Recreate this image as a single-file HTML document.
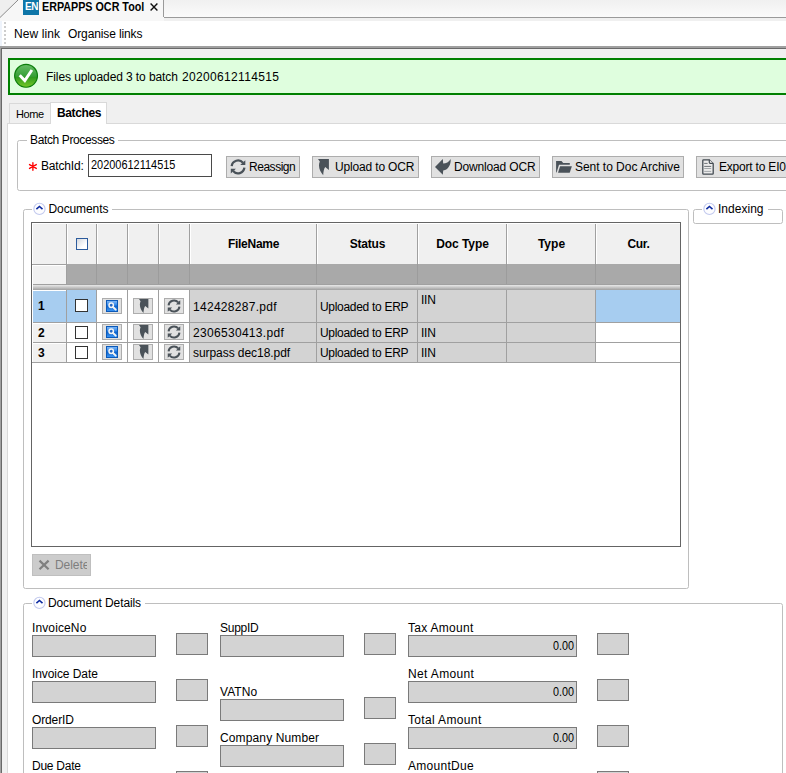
<!DOCTYPE html>
<html><head><meta charset="utf-8">
<style>
*{box-sizing:border-box;margin:0;padding:0}
html,body{width:786px;height:773px;overflow:hidden;background:#f0f0f0}
body{position:relative;font-family:"Liberation Sans",sans-serif;font-size:12px;color:#000}
.a{position:absolute}
.t{position:absolute;white-space:nowrap;line-height:14px;height:14px}
.b{font-weight:bold}
.btn{position:absolute;background:#e1e1e1;border:1px solid #adadad}
.fs{position:absolute;border:1px solid #bebebe;border-radius:2.5px}
.lg{position:absolute;background:#fff;height:14px}
.in{position:absolute;background:#d3d3d3;border:1px solid #7a7a7a}
.cb{position:absolute;width:13px;height:13px;background:#fff;border:1px solid #333}
.vl{position:absolute;width:1px;background:#a0a0a0}
.hl{position:absolute;height:1px;background:#a0a0a0}
/*LS*/
#en{letter-spacing:-0.35px}
#nl{letter-spacing:0.09px}
#ol{letter-spacing:-0.12px}
#bn{letter-spacing:-0.09px}
#bn2{letter-spacing:0.34px}
#home{letter-spacing:-0.44px}
#batches{letter-spacing:-0.37px}
#bp{letter-spacing:-0.37px}
#bid{letter-spacing:-0.17px}
#b1{letter-spacing:-0.47px}
#b2{letter-spacing:-0.16px}
#b3{letter-spacing:-0.16px}
#b4{letter-spacing:-0.03px}
#docs{letter-spacing:-0.10px}
#idx{letter-spacing:0.02px}
#dd{letter-spacing:-0.11px}
#h1{letter-spacing:-0.27px}
#h2{letter-spacing:-0.20px}
#h3{letter-spacing:-0.05px}
#h4{letter-spacing:0.02px}
#h5{letter-spacing:-0.29px}
#f1{letter-spacing:0.29px}
#f2{letter-spacing:0.31px}
#f3{letter-spacing:-0.06px}
#s1{letter-spacing:-0.30px}
#s2{letter-spacing:-0.30px}
#s3{letter-spacing:-0.30px}
#d1{letter-spacing:-0.21px}
#d2{letter-spacing:-0.21px}
#d3{letter-spacing:-0.21px}
#l1{letter-spacing:0.12px}
#l2{letter-spacing:-0.08px}
#l3{letter-spacing:-0.13px}
#l4{letter-spacing:-0.25px}
#l5{letter-spacing:-0.27px}
#l6{letter-spacing:0.06px}
#l7{letter-spacing:0.13px}
#l8{letter-spacing:0.29px}
#l9{letter-spacing:0.36px}
#l10{letter-spacing:0.35px}
#l11{letter-spacing:0.29px}
/*ENDLS*/
</style></head><body>

<!-- top tab strip -->
<div class="a" style="left:0;top:0;width:786px;height:18px;background:linear-gradient(#f0f0f0,#fbfbfb)"></div>
<div class="a" style="left:0;top:0;width:164px;height:21px;background:#f7f7f7"></div>
<svg class="a" style="left:0;top:0" width="20" height="20"><polygon points="0,0 17.5,0 0,17" fill="#efefef"/><line x1="18" y1="0" x2="0" y2="17.5" stroke="#8a8a8a" stroke-width="1"/></svg>
<div class="a" style="left:163px;top:0;width:1px;height:17px;background:#9a9a9a"></div>
<div class="a" style="left:164px;top:17px;width:622px;height:1px;background:#9a9a9a"></div>
<div class="a" style="left:164px;top:18px;width:622px;height:3px;background:#f0f0f0"></div>
<div class="a" style="left:23px;top:0;width:16px;height:15px;background:#0f76a8"></div>
<div class="t b" id="en" style="left:25px;top:0px;font-size:10px;color:#fff">EN</div>
<div class="t b" id="title" style="left:42px;top:0px;font-size:12px;transform-origin:0 0;transform:scaleX(0.895)">ERPAPPS OCR Tool</div>
<svg class="a" style="left:149px;top:1.5px" width="10" height="10"><path d="M1.6 1.6 L8.4 8.4 M8.4 1.6 L1.6 8.4" stroke="#111" stroke-width="1.4"/></svg>

<!-- toolbar -->
<div class="a" style="left:0;top:21px;width:786px;height:25px;background:#fff"></div>
<div class="a" style="left:0;top:21px;width:2px;height:25px;background:#eef3fb"></div>
<div class="a" style="left:4px;top:22px;width:2px;height:25px;background:repeating-linear-gradient(#cdcdcd 0 2px,#fff 2px 4px)"></div>
<div class="t" id="nl" style="left:14px;top:27px;font-size:12px">New link</div>
<div class="t" id="ol" style="left:68px;top:27px;font-size:12px">Organise links</div>

<!-- main panel border -->
<div class="a" style="left:0;top:46px;width:786px;height:2px;background:#a0a0a0"></div>
<div class="a" style="left:0;top:48px;width:786px;height:1px;background:#696969"></div>
<div class="a" style="left:0;top:46px;width:1px;height:727px;background:#a0a0a0"></div>
<div class="a" style="left:1px;top:48px;width:1px;height:725px;background:#696969"></div>

<!-- banner -->
<div class="a" style="left:8px;top:58px;width:790px;height:37px;background:#dffede;border:2px solid #008000"></div>
<svg class="a" style="left:13px;top:63px" width="26" height="26" viewBox="0 0 26 26">
<defs><linearGradient id="g1" x1="0" y1="0" x2="0" y2="1"><stop offset="0" stop-color="#66bd66"/><stop offset="0.52" stop-color="#379f37"/><stop offset="0.56" stop-color="#2f9a1f"/><stop offset="1" stop-color="#78c828"/></linearGradient></defs>
<circle cx="13.05" cy="12.85" r="11.4" fill="url(#g1)" stroke="#0b7d0b" stroke-width="1.2"/>
<path d="M6.7 12.3 L11.8 17.6 L18.9 7" fill="none" stroke="#fff" stroke-width="2.9" stroke-linejoin="miter"/>
</svg>
<div class="t" id="bn" style="left:46px;top:70px;font-size:12px">Files uploaded 3 to batch</div>
<div class="t" id="bn2" style="left:182px;top:70px;font-size:12px">20200612114515</div>

<!-- tabs -->
<div class="a" style="left:7px;top:123px;width:790px;height:660px;background:#fff;border:1px solid #d9d9d9"></div>
<div class="a" style="left:9px;top:103px;width:42px;height:20px;background:#f0f0f0;border:1px solid #d9d9d9;border-bottom:none"></div>
<div class="a" style="left:50px;top:102px;width:57px;height:22px;background:#fff;border:1px solid #d9d9d9;border-bottom:none"></div>
<div class="t" id="home" style="left:16px;top:107px;font-size:11px">Home</div>
<div class="t b" id="batches" style="left:57px;top:106px;font-size:12px">Batches</div>

<!-- Batch processes -->
<div class="fs" style="left:17px;top:140px;width:790px;height:51px"></div>
<div class="lg" style="left:27px;top:133px;width:91px"></div>
<div class="t" id="bp" style="left:30px;top:133px;font-size:12px">Batch Processes</div>
<svg class="a" style="left:27px;top:160px" width="12" height="13" viewBox="0 0 12 13"><path d="M5.9 2.7 V10.3 M2.5 4.55 L9.3 8.45 M9.3 4.55 L2.5 8.45" stroke="#ff0000" stroke-width="1.35" stroke-linecap="round" fill="none"/></svg>
<div class="t" id="bid" style="left:41px;top:159px;font-size:12px">BatchId:</div>
<div class="a" style="left:88px;top:154px;width:124px;height:23px;background:#fff;border:1px solid #4a4a4a"></div>
<div class="t" id="bidv" style="left:91px;top:158px;font-size:13px;transform-origin:0 0;transform:scaleX(0.842)">20200612114515</div>

<div class="btn" style="left:226px;top:156px;width:74px;height:22px"></div>
<svg class="a" style="left:226px;top:154px" width="26" height="26" viewBox="0 0 26 26"><use href="#iref"/></svg>
<div class="t" id="b1" style="left:249px;top:160px;font-size:12px">Reassign</div>

<div class="btn" style="left:312px;top:156px;width:107px;height:22px"></div>
<svg class="a" style="left:318px;top:159px" width="14" height="18" viewBox="0 0 14 18"><use href="#iup"/></svg>
<div class="t" id="b2" style="left:335px;top:160px;font-size:12px">Upload to OCR</div>

<div class="btn" style="left:431px;top:156px;width:109px;height:22px"></div>
<svg class="a" style="left:430px;top:154px" width="26" height="26" viewBox="0 0 26 26"><path d="M5 13 L12.8 5 L13.2 9.6 C16 9.6 19 8 20.6 5 C21.2 10 18.5 15.8 13.2 16.6 L12.8 20.8 Z" fill="#4a5259"/></svg>
<div class="t" id="b3" style="left:454px;top:160px;font-size:12px">Download OCR</div>

<div class="btn" style="left:552px;top:156px;width:132px;height:22px"></div>
<svg class="a" style="left:550px;top:154px" width="26" height="26" viewBox="0 0 26 26"><path d="M6.1 7.1 L11.5 7.1 L13.2 9 L19.8 9 L19.8 10.7 L9 10.7 L6.6 18.4 L6.1 18.4 Z" fill="#4a5259"/><path d="M10.1 12.2 L21.9 12.2 L19.7 18.7 L8 18.7 Z" fill="#4a5259"/></svg>
<div class="t" id="b4" style="left:575px;top:160px;font-size:12px">Sent to Doc Archive</div>

<div class="btn" style="left:696px;top:156px;width:110px;height:22px"></div>
<svg class="a" style="left:694px;top:154px" width="26" height="26" viewBox="0 0 26 26"><path d="M9.5 5.8 L15.3 5.8 L19.2 9.7 L19.2 19.5 Q19.2 20.2 18.5 20.2 L9.5 20.2 Q8.8 20.2 8.8 19.5 L8.8 6.5 Q8.8 5.8 9.5 5.8 Z" fill="#ebebeb" stroke="#434b52" stroke-width="1.3"/><path d="M15.3 5.8 L15.3 8.6 Q15.3 9.4 16.1 9.4 L19.2 9.4" fill="#ebebeb" stroke="#434b52" stroke-width="1.2"/><path d="M10.2 9.4 H13.6 M10.2 12.4 H17.2" stroke="#5d646a" stroke-width="0.9"/><path d="M10.2 14.5 H17.2 M10.2 17.4 H17.2" stroke="#9a9fa3" stroke-width="0.9"/></svg>
<div class="t" id="b5" style="left:719px;top:160px;font-size:12px;letter-spacing:-0.2px">Export to EI02</div>

<!-- Documents fieldset -->
<div class="fs" style="left:23px;top:209px;width:666px;height:380px"></div>
<div class="lg" style="left:32px;top:202px;width:80px"></div>
<svg class="a" style="left:32px;top:201px" width="15" height="15" viewBox="0 0 15 15"><circle cx="7.45" cy="7.9" r="5.6" fill="#fdfdff" stroke="#c2c9ee" stroke-width="1.1"/><path d="M4.4 8.1 L7.45 5.5 L10.5 8.1" fill="none" stroke="#0c2aa0" stroke-width="1.6"/></svg>
<div class="t" id="docs" style="left:48.5px;top:202px;font-size:12px">Documents</div>

<!-- Indexing fieldset -->
<div class="fs" style="left:693px;top:209px;width:90px;height:15px"></div>
<div class="lg" style="left:702px;top:202px;width:66px"></div>
<svg class="a" style="left:702px;top:201px" width="15" height="15" viewBox="0 0 15 15"><circle cx="7.45" cy="7.9" r="5.6" fill="#fdfdff" stroke="#c2c9ee" stroke-width="1.1"/><path d="M4.4 8.1 L7.45 5.5 L10.5 8.1" fill="none" stroke="#0c2aa0" stroke-width="1.6"/></svg>
<div class="t" id="idx" style="left:718px;top:202px;font-size:12px">Indexing</div>

<!-- grid -->
<div class="a" id="grid" style="left:31px;top:222px;width:650px;height:325px;background:#fff;border:1px solid #646464"></div>
<!-- header -->
<div class="a" style="left:32px;top:223px;width:648px;height:41px;background:#f0f0f0"></div>
<div class="a" style="left:32px;top:264px;width:35px;height:20px;background:#f0f0f0"></div>
<div class="a" style="left:67px;top:264px;width:613px;height:20px;background:#a9a9a9"></div>
<div class="a" style="left:32px;top:284px;width:648px;height:1px;background:#a0a0a0"></div>
<div class="a" style="left:32px;top:285px;width:648px;height:5px;background:linear-gradient(#e8e8e8,#a0a0a0)"></div>
<!-- header verticals -->
<div class="vl" style="left:66px;top:223px;height:41px"></div>
<div class="vl" style="left:96px;top:223px;height:41px"></div>
<div class="vl" style="left:127px;top:223px;height:41px"></div>
<div class="vl" style="left:158px;top:223px;height:41px"></div>
<div class="vl" style="left:189px;top:223px;height:41px"></div>
<div class="vl" style="left:316px;top:223px;height:41px"></div>
<div class="vl" style="left:417px;top:223px;height:41px"></div>
<div class="vl" style="left:506px;top:223px;height:41px"></div>
<div class="vl" style="left:595px;top:223px;height:41px"></div>
<div class="vl" style="left:96px;top:264px;height:20px;background:#9c9c9c"></div>
<div class="vl" style="left:127px;top:264px;height:20px;background:#9c9c9c"></div>
<div class="vl" style="left:158px;top:264px;height:20px;background:#9c9c9c"></div>
<div class="vl" style="left:189px;top:264px;height:20px;background:#9c9c9c"></div>
<div class="vl" style="left:316px;top:264px;height:20px;background:#9c9c9c"></div>
<div class="vl" style="left:417px;top:264px;height:20px;background:#9c9c9c"></div>
<div class="vl" style="left:506px;top:264px;height:20px;background:#9c9c9c"></div>
<div class="vl" style="left:595px;top:264px;height:20px;background:#9c9c9c"></div>
<div class="vl" style="left:67px;top:224px;height:40px;background:#fff"></div>
<div class="vl" style="left:97px;top:224px;height:40px;background:#fff"></div>
<div class="vl" style="left:128px;top:224px;height:40px;background:#fff"></div>
<div class="vl" style="left:159px;top:224px;height:40px;background:#fff"></div>
<div class="vl" style="left:190px;top:224px;height:40px;background:#fff"></div>
<div class="vl" style="left:317px;top:224px;height:40px;background:#fff"></div>
<div class="vl" style="left:418px;top:224px;height:40px;background:#fff"></div>
<div class="vl" style="left:507px;top:224px;height:40px;background:#fff"></div>
<div class="vl" style="left:596px;top:224px;height:40px;background:#fff"></div>
<div class="a" style="left:32px;top:223px;width:648px;height:1px;background:#fff"></div>
<div class="a" style="left:32px;top:223px;width:1px;height:139px;background:#fff"></div>
<div class="hl" style="left:32px;top:264px;width:35px"></div>
<div class="a" style="left:33px;top:265px;width:33px;height:1px;background:#fff"></div>
<div class="vl" style="left:66px;top:264px;height:20px"></div>
<div class="a" style="left:76px;top:238px;width:12px;height:12px;border:1px solid #2c5b9c;background:linear-gradient(135deg,#d4d8de,#fff 70%)"></div>
<div class="t b" id="h1" style="left:190px;top:237px;width:127px;text-align:center;font-size:12px">FileName</div>
<div class="t b" id="h2" style="left:317px;top:237px;width:101px;text-align:center;font-size:12px">Status</div>
<div class="t b" id="h3" style="left:418px;top:237px;width:89px;text-align:center;font-size:12px">Doc Type</div>
<div class="t b" id="h4" style="left:507px;top:237px;width:89px;text-align:center;font-size:12px">Type</div>
<div class="t b" id="h5" style="left:596px;top:237px;width:85px;text-align:center;font-size:12px">Cur.</div>

<!-- rows backgrounds -->
<div class="a" style="left:32px;top:290px;width:64px;height:32px;background:#a7cdf0"></div>
<div class="a" style="left:32px;top:323px;width:34px;height:39px;background:#f0f0f0"></div>
<div class="a" style="left:190px;top:290px;width:406px;height:72px;background:#d3d3d3"></div>
<div class="a" style="left:596px;top:290px;width:84px;height:32px;background:#a7cdf0"></div>
<!-- row lines -->
<div class="hl" style="left:32px;top:322px;width:648px"></div>
<div class="hl" style="left:32px;top:342px;width:648px"></div>
<div class="hl" style="left:32px;top:362px;width:648px"></div>
<div class="vl" style="left:66px;top:290px;height:72px"></div>
<div class="vl" style="left:96px;top:290px;height:72px"></div>
<div class="vl" style="left:127px;top:290px;height:72px"></div>
<div class="vl" style="left:158px;top:290px;height:72px"></div>
<div class="vl" style="left:189px;top:290px;height:72px"></div>
<div class="vl" style="left:316px;top:290px;height:72px"></div>
<div class="vl" style="left:417px;top:290px;height:72px"></div>
<div class="vl" style="left:506px;top:290px;height:72px"></div>
<div class="vl" style="left:595px;top:290px;height:72px"></div>

<div class="a" style="left:32px;top:290px;width:1px;height:72px;background:#fff"></div>
<div class="a" style="left:33px;top:290px;width:33px;height:1px;background:#fff"></div>
<div class="a" style="left:33px;top:323px;width:33px;height:1px;background:#fff"></div>
<div class="a" style="left:33px;top:343px;width:33px;height:1px;background:#fff"></div>
<div class="t b" id="n1" style="left:38px;top:299px;font-size:12px">1</div>
<div class="t b" id="n2" style="left:38px;top:326px;font-size:12px">2</div>
<div class="t b" id="n3" style="left:38px;top:346px;font-size:12px">3</div>
<div class="cb" style="left:75px;top:299px"></div>
<div class="cb" style="left:75px;top:326px"></div>
<div class="cb" style="left:75px;top:346px"></div>

<svg width="0" height="0" style="position:absolute"><defs>
<g id="isearch"><linearGradient id="sg" x1="0" y1="0" x2="0" y2="1"><stop offset="0" stop-color="#86bbf6"/><stop offset="0.42" stop-color="#2f86ea"/><stop offset="0.5" stop-color="#0c60c8"/><stop offset="1" stop-color="#409af8"/></linearGradient><rect x="0.5" y="0.5" width="11" height="11" fill="url(#sg)" stroke="#0c59b8" stroke-width="1"/><circle cx="5.2" cy="5.2" r="2.2" fill="#2468c4" stroke="#f4f4f4" stroke-width="1.5"/><path d="M7 7 L9.7 9.7" stroke="#f4f4f4" stroke-width="1.9" stroke-linecap="round"/></g>
<g id="iup"><path d="M0 0 L10.9 0 L10.9 11 L7.2 8 C5.9 9.8 5.4 12.8 5.2 16.2 C2 12.8 -0.3 7.6 1.8 2.5 Z" fill="#4a5259"/></g>
<g id="iref"><g fill="none" stroke="#4a5259" stroke-width="2.3"><path d="M5.7 12.12 A6.4 6.4 0 0 1 16.95 8.79"/><path d="M18.4 13.68 A6.4 6.4 0 0 1 7.15 17.01"/></g><path d="M19.3 6.2 L19.3 11.1 L14.2 11.1 Z" fill="#4a5259"/><path d="M4.8 19.6 L4.8 14.7 L9.9 14.7 Z" fill="#4a5259"/></g>
</defs></svg>

<!-- row buttons -->
<div class="btn" style="left:102px;top:298px;width:20px;height:16px"></div>
<div class="btn" style="left:102px;top:324px;width:20px;height:16px"></div>
<div class="btn" style="left:102px;top:344px;width:20px;height:16px"></div>
<svg class="a" style="left:106px;top:300px" width="12" height="12"><use href="#isearch"/></svg>
<svg class="a" style="left:106px;top:326px" width="12" height="12"><use href="#isearch"/></svg>
<svg class="a" style="left:106px;top:346px" width="12" height="12"><use href="#isearch"/></svg>

<div class="btn" style="left:133px;top:298px;width:20px;height:16px"></div>
<div class="btn" style="left:133px;top:324px;width:20px;height:16px"></div>
<div class="btn" style="left:133px;top:344px;width:20px;height:16px"></div>
<svg class="a" style="left:138.5px;top:299px" width="12" height="16"><use href="#iup" transform="scale(0.86)"/></svg>
<svg class="a" style="left:138.5px;top:325px" width="12" height="16"><use href="#iup" transform="scale(0.86)"/></svg>
<svg class="a" style="left:138.5px;top:345px" width="12" height="16"><use href="#iup" transform="scale(0.86)"/></svg>

<div class="btn" style="left:164px;top:298px;width:20px;height:16px"></div>
<div class="btn" style="left:164px;top:324px;width:20px;height:16px"></div>
<div class="btn" style="left:164px;top:344px;width:20px;height:16px"></div>
<svg class="a" style="left:160px;top:292px" width="30" height="26"><use href="#iref" transform="translate(3.64,2.9) scale(0.86)"/></svg>
<svg class="a" style="left:160px;top:318px" width="30" height="26"><use href="#iref" transform="translate(3.64,2.9) scale(0.86)"/></svg>
<svg class="a" style="left:160px;top:338px" width="30" height="26"><use href="#iref" transform="translate(3.64,2.9) scale(0.86)"/></svg>

<div class="t" id="f1" style="left:193px;top:300px;font-size:12px">142428287.pdf</div>
<div class="t" id="f2" style="left:193px;top:326px;font-size:12px">2306530413.pdf</div>
<div class="t" id="f3" style="left:193px;top:346px;font-size:12px">surpass dec18.pdf</div>
<div class="t" id="s1" style="left:320px;top:300px;font-size:12px">Uploaded to ERP</div>
<div class="t" id="s2" style="left:320px;top:326px;font-size:12px">Uploaded to ERP</div>
<div class="t" id="s3" style="left:320px;top:346px;font-size:12px">Uploaded to ERP</div>
<div class="t" id="d1" style="left:421px;top:293px;font-size:12px">IIN</div>
<div class="t" id="d2" style="left:421px;top:326px;font-size:12px">IIN</div>
<div class="t" id="d3" style="left:421px;top:346px;font-size:12px">IIN</div>

<!-- delete -->
<div class="a" style="left:32px;top:554px;width:59px;height:22px;background:#cccccc;border:1px solid #bfbfbf;overflow:hidden"></div>
<svg class="a" style="left:38px;top:559px" width="13" height="12"><path d="M1.5 1.6 L10.6 10.2 M10.6 1.6 L1.5 10.2" stroke="#808080" stroke-width="2.2"/></svg>
<div class="t" id="del" style="left:55px;top:558px;font-size:12px;color:#7e7e7e;width:31.8px;overflow:hidden;letter-spacing:-0.05px">Delete</div>

<!-- Document Details -->
<div class="fs" style="left:23px;top:603px;width:760px;height:200px"></div>
<div class="lg" style="left:32px;top:596px;width:113px"></div>
<svg class="a" style="left:32px;top:595px" width="15" height="15" viewBox="0 0 15 15"><circle cx="7.45" cy="7.9" r="5.6" fill="#fdfdff" stroke="#c2c9ee" stroke-width="1.1"/><path d="M4.4 8.1 L7.45 5.5 L10.5 8.1" fill="none" stroke="#0c2aa0" stroke-width="1.6"/></svg>
<div class="t" id="dd" style="left:48px;top:596px;font-size:12px">Document Details</div>

<div class="t" id="l1" style="left:32px;top:621px;font-size:12px">InvoiceNo</div>
<div class="in" style="left:32px;top:635px;width:124px;height:22px"></div>
<div class="in" style="left:176px;top:633px;width:32px;height:22px"></div>
<div class="t" id="l2" style="left:32px;top:667px;font-size:12px">Invoice Date</div>
<div class="in" style="left:32px;top:681px;width:124px;height:22px"></div>
<div class="in" style="left:176px;top:679px;width:32px;height:22px"></div>
<div class="t" id="l3" style="left:32px;top:713px;font-size:12px">OrderID</div>
<div class="in" style="left:32px;top:727px;width:124px;height:22px"></div>
<div class="in" style="left:176px;top:725px;width:32px;height:22px"></div>
<div class="t" id="l4" style="left:32px;top:759px;font-size:12px">Due Date</div>
<div class="in" style="left:176px;top:771px;width:32px;height:22px"></div>

<div class="t" id="l5" style="left:220px;top:621px;font-size:12px">SuppID</div>
<div class="in" style="left:220px;top:635px;width:124px;height:22px"></div>
<div class="in" style="left:364px;top:633px;width:32px;height:22px"></div>
<div class="t" id="l6" style="left:220px;top:685px;font-size:12px">VATNo</div>
<div class="in" style="left:220px;top:699px;width:124px;height:22px"></div>
<div class="in" style="left:364px;top:697px;width:32px;height:22px"></div>
<div class="t" id="l7" style="left:220px;top:731px;font-size:12px">Company Number</div>
<div class="in" style="left:220px;top:745px;width:124px;height:22px"></div>
<div class="in" style="left:364px;top:743px;width:32px;height:22px"></div>

<div class="t" id="l8" style="left:408px;top:621px;font-size:12px">Tax Amount</div>
<div class="in" style="left:408px;top:635px;width:169px;height:22px"></div>
<div class="t" id="v1" style="left:553.4px;top:639px;font-size:13px;transform-origin:0 0;transform:scaleX(0.83)">0.00</div>
<div class="in" style="left:597px;top:633px;width:32px;height:22px"></div>
<div class="t" id="l9" style="left:408px;top:667px;font-size:12px">Net Amount</div>
<div class="in" style="left:408px;top:681px;width:169px;height:22px"></div>
<div class="t" id="v2" style="left:553.4px;top:685px;font-size:13px;transform-origin:0 0;transform:scaleX(0.83)">0.00</div>
<div class="in" style="left:597px;top:679px;width:32px;height:22px"></div>
<div class="t" id="l10" style="left:408px;top:713px;font-size:12px">Total Amount</div>
<div class="in" style="left:408px;top:727px;width:169px;height:22px"></div>
<div class="t" id="v3" style="left:553.4px;top:731px;font-size:13px;transform-origin:0 0;transform:scaleX(0.83)">0.00</div>
<div class="in" style="left:597px;top:725px;width:32px;height:22px"></div>
<div class="t" id="l11" style="left:408px;top:759px;font-size:12px">AmountDue</div>
<div class="in" style="left:597px;top:771px;width:32px;height:22px"></div>

</body></html>
